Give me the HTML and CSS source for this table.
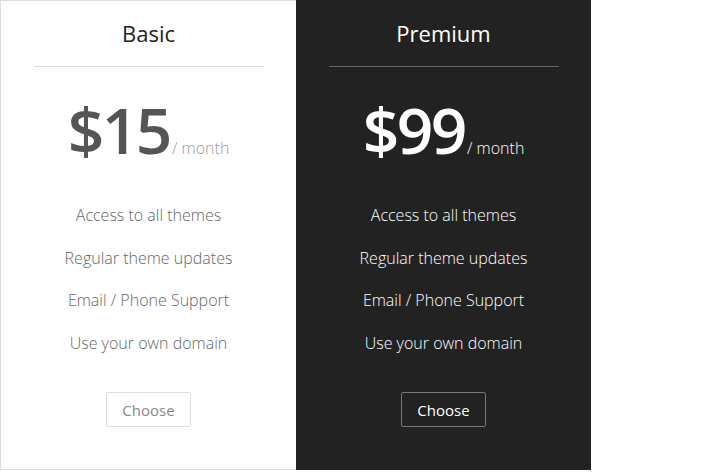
FILE: index.html
```html
<!DOCTYPE html>
<html lang="en">
<head>
<meta charset="utf-8">
<title>Pricing</title>
<link rel="stylesheet" href="styles.css">
</head>
<body>
<div class="pricing">
  <section class="plan plan-basic">
    <h3 class="plan-title">Basic</h3>
    <div class="plan-price"><span class="amount">$15</span><span class="period">/ month</span></div>
    <ul class="features">
      <li>Access to all themes</li>
      <li>Regular theme updates</li>
      <li>Email / Phone Support</li>
      <li>Use your own domain</li>
    </ul>
    <button class="choose">Choose</button>
  </section>
  <section class="plan plan-premium">
    <h3 class="plan-title">Premium</h3>
    <div class="plan-price"><span class="amount">$99</span><span class="period">/ month</span></div>
    <ul class="features">
      <li>Access to all themes</li>
      <li>Regular theme updates</li>
      <li>Email / Phone Support</li>
      <li>Use your own domain</li>
    </ul>
    <button class="choose">Choose</button>
  </section>
</div>
</body>
</html>
```

FILE: styles.css
```css
html, body {
  margin: 0;
  padding: 0;
  background: #fff;
}
body {
  font-family: "Open Sans", "Liberation Sans", sans-serif;
}
.pricing {
  display: flex;
  align-items: flex-start;
}
.plan {
  box-sizing: border-box;
  height: 470px;
  padding: 19px 0 0;
  display: flex;
  flex-direction: column;
  align-items: center;
  text-align: center;
}
.plan-basic {
  width: 296px;
  border: 1px solid #ddd;
  border-right: none;
  background: #fff;
  padding-top: 18px;
}
.plan-premium {
  width: 295px;
  background: #222;
  color: #fff;
}
.plan-title {
  margin: 0;
  font-size: 22px;
  line-height: 28px;
  font-weight: 400;
  color: #222;
  width: 230px;
  padding-bottom: 19px;
  border-bottom: 1px solid #ddd;
}
.plan-premium .plan-title {
  color: #fff;
  border-bottom-color: #666;
}
.plan-price {
  margin-top: 31px;
  height: 64px;
  line-height: 64px;
  display: flex;
  align-items: baseline;
  justify-content: center;
}
.amount {
  font-size: 64px;
  font-weight: 600;
  color: #555;
  letter-spacing: -2.5px;
}
.period {
  font-size: 16px;
  font-weight: 300;
  color: #999;
  margin-left: 2px;
}
.plan-premium .amount,
.plan-premium .period {
  color: #fff;
}
.features {
  list-style: none;
  margin: 32px 0 0;
  padding: 0;
}
.features li {
  font-size: 16px;
  font-weight: 300;
  line-height: 42.5px;
  color: #666;
}
.plan-premium .features li {
  color: #fff;
}
.choose {
  margin-top: 28px;
  height: 35px;
  padding: 0 15px;
  font-family: inherit;
  font-size: 15px;
  font-weight: 400;
  background: transparent;
  border: 1px solid #ddd;
  border-radius: 2px;
  color: #888;
  cursor: pointer;
}
.plan-premium .choose {
  border-color: #777;
  color: #fff;
}
```
